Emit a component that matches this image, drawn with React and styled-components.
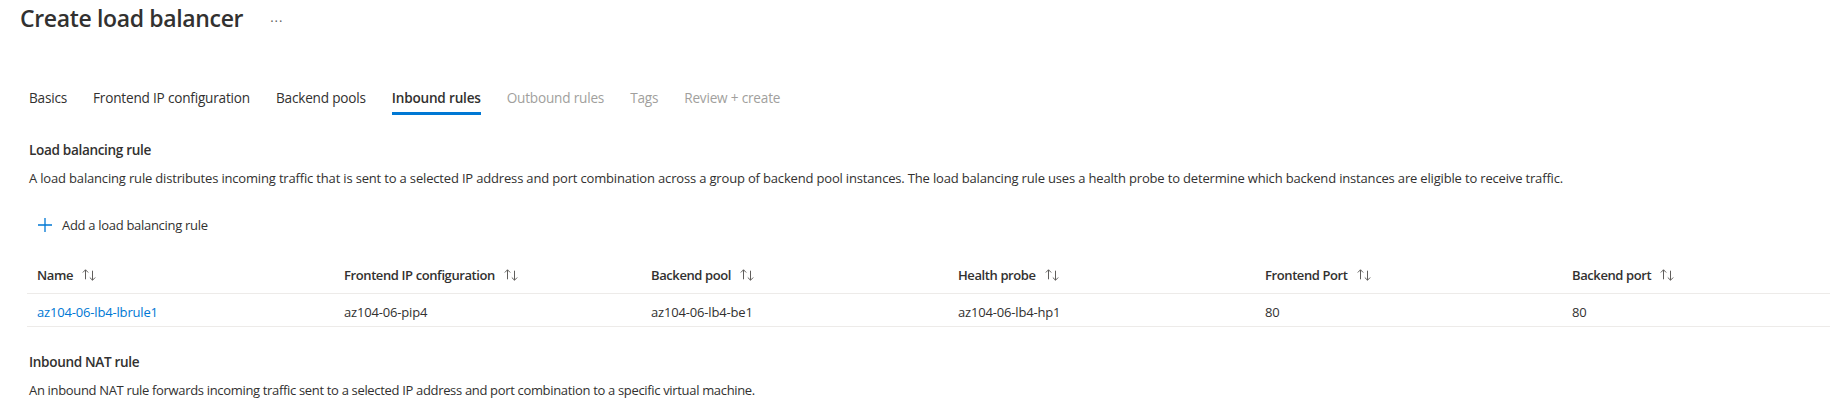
import React from "react";
import styled, { createGlobalStyle } from "styled-components";

const GlobalStyle = createGlobalStyle`
  html, body {
    margin: 0;
    padding: 0;
    background: #ffffff;
  }
  body {
    font-family: "Segoe UI", "Open Sans", "Noto Sans", sans-serif;
    color: #323130;
    -webkit-font-smoothing: antialiased;
  }
`;

const Page = styled.div`
  width: 1830px;
  height: 415px;
  overflow: hidden;
  box-sizing: border-box;
`;

const TitleBar = styled.div`
  display: flex;
  align-items: center;
  margin-top: 2px;
  padding-left: 20px;
  height: 32px;
`;

const Title = styled.h1`
  margin: 0;
  font-size: 23px;
  line-height: 32px;
  font-weight: 600;
  letter-spacing: -0.35px;
  color: #323130;
`;

const More = styled.span`
  margin-left: 27px;
  font-size: 13px;
  letter-spacing: 1px;
  color: #605e5c;
  line-height: 1;
  transform: translateY(3px);
`;

const Body = styled.div`
  padding-left: 29px;
`;

const Tabs = styled.div`
  display: flex;
  gap: 26px;
  margin-top: 54px;
`;

const Tab = styled.button`
  background: none;
  border: none;
  padding: 0 0 4px;
  margin: 0;
  font-family: inherit;
  font-size: 13.6px;
  line-height: 20px;
  letter-spacing: -0.2px;
  font-weight: ${(p) => (p.$active ? 600 : 400)};
  color: ${(p) => (p.$disabled ? "#a19f9d" : "#323130")};
  border-bottom: 3px solid ${(p) => (p.$active ? "#0078d4" : "transparent")};
  cursor: ${(p) => (p.$disabled ? "default" : "pointer")};
`;

const SectionTitle = styled.h2`
  margin: ${(p) => p.$top}px 0 0;
  font-size: 13.6px;
  line-height: 20px;
  font-weight: 600;
  letter-spacing: -0.35px;
  color: #323130;
`;

const Description = styled.p`
  margin: 8px 0 0;
  font-size: 13px;
  line-height: 20px;
  letter-spacing: ${(p) => (p.$tight ? "-0.33px" : "-0.17px")};
  color: #323130;
  white-space: nowrap;
`;

const AddButton = styled.button`
  display: flex;
  align-items: center;
  gap: 9px;
  margin: 27px 0 0 8px;
  padding: 0;
  border: none;
  background: none;
  font-family: inherit;
  font-size: 13px;
  line-height: 20px;
  letter-spacing: -0.3px;
  color: #323130;
  cursor: pointer;
`;

const Table = styled.div`
  margin: 22px 0 0 -2px;
`;

const Row = styled.div`
  display: grid;
  grid-template-columns: repeat(6, 307px);
  border-bottom: 1px solid #edebe9;
`;

const HeaderCell = styled.div`
  display: flex;
  align-items: center;
  gap: 8px;
  padding: 8px 10px;
  font-size: 13px;
  line-height: 20px;
  font-weight: 600;
  letter-spacing: -0.4px;
  color: #323130;
`;

const Cell = styled.div`
  padding: 8px 10px 4px;
  font-size: 13px;
  line-height: 20px;
  letter-spacing: -0.17px;
  color: #323130;
`;

const NameLink = styled.a`
  color: #0078d4;
  text-decoration: none;
  cursor: pointer;
`;

const PlusIcon = () => (
  <svg width="16" height="16" viewBox="0 0 16 16" fill="none">
    <path d="M8 1v14M1 8h14" stroke="#0078d4" strokeWidth="1.3" />
  </svg>
);

const SortIcon = () => (
  <svg width="16" height="12" viewBox="0 0 16 12" fill="none" stroke="#605e5c" strokeWidth="1">
    <path d="M4.5 0.8v9.5M1.8 3.5l2.7-2.7 2.7 2.7" />
    <path d="M11.5 1.7v9.5M8.8 8.5l2.7 2.7 2.7-2.7" />
  </svg>
);

const tabs = [
  { label: "Basics" },
  { label: "Frontend IP configuration" },
  { label: "Backend pools" },
  { label: "Inbound rules", active: true },
  { label: "Outbound rules", disabled: true },
  { label: "Tags", disabled: true },
  { label: "Review + create", disabled: true },
];

const columns = [
  "Name",
  "Frontend IP configuration",
  "Backend pool",
  "Health probe",
  "Frontend Port",
  "Backend port",
];

const rule = [
  "az104-06-pip4",
  "az104-06-lb4-be1",
  "az104-06-lb4-hp1",
  "80",
  "80",
];

export default function App() {
  return (
    <Page>
      <GlobalStyle />
      <TitleBar>
        <Title>Create load balancer</Title>
        <More>···</More>
      </TitleBar>
      <Body>
        <Tabs>
          {tabs.map((t) => (
            <Tab key={t.label} $active={t.active} $disabled={t.disabled}>
              {t.label}
            </Tab>
          ))}
        </Tabs>

        <SectionTitle $top={25}>Load balancing rule</SectionTitle>
        <Description>
          A load balancing rule distributes incoming traffic that is sent to a
          selected IP address and port combination across a group of backend
          pool instances. The load balancing rule uses a health probe to
          determine which backend instances are eligible to receive traffic.
        </Description>

        <AddButton>
          <PlusIcon />
          Add a load balancing rule
        </AddButton>

        <Table>
          <Row>
            {columns.map((c) => (
              <HeaderCell key={c}>
                {c}
                <SortIcon />
              </HeaderCell>
            ))}
          </Row>
          <Row>
            <Cell>
              <NameLink>az104-06-lb4-lbrule1</NameLink>
            </Cell>
            {rule.map((v, i) => (
              <Cell key={i}>{v}</Cell>
            ))}
          </Row>
        </Table>

        <SectionTitle $top={25}>Inbound NAT rule</SectionTitle>
        <Description $tight>
          An inbound NAT rule forwards incoming traffic sent to a selected IP
          address and port combination to a specific virtual machine.
        </Description>
      </Body>
    </Page>
  );
}
